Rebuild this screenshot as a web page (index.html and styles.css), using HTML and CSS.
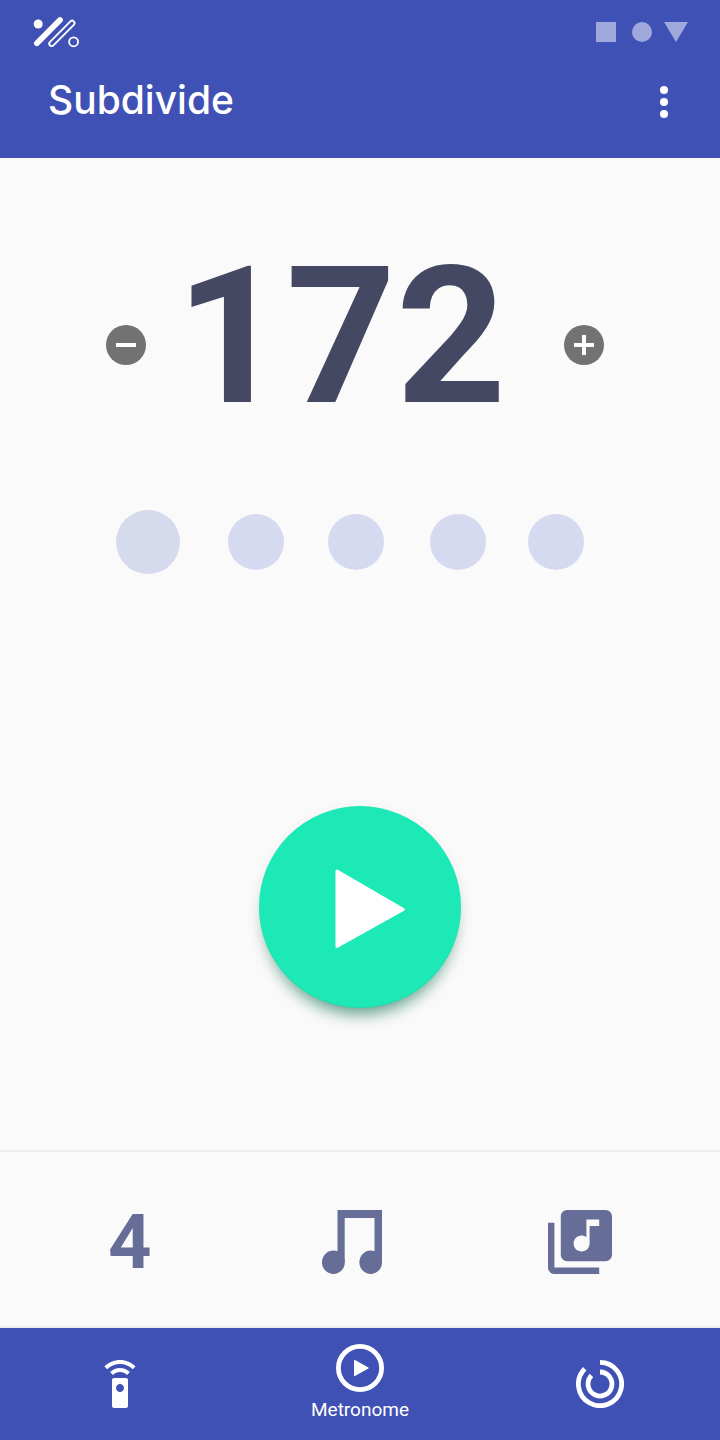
FILE: index.html
```html
<!DOCTYPE html>
<html lang="en">
<head>
<meta charset="utf-8">
<meta name="viewport" content="width=device-width, initial-scale=1">
<title>Subdivide</title>
<link rel="stylesheet" href="styles.css">
</head>
<body>
<header class="header">
  <div class="status">
    <svg class="logo" viewBox="0 0 48 32" aria-hidden="true" fill="none" stroke="#fff" stroke-linecap="round">
      <circle cx="6.2" cy="8" r="4.5" fill="#fff" stroke="none"/>
      <path d="M4.9 27.2L28 4" stroke-width="5.8"/>
      <path d="M18 25.8L38.4 5.4a2.3 2.3 0 0 1 3.4 3.4L21.4 29.4a2.3 2.3 0 0 1-3.4-3.6z" stroke-width="1.8"/>
      <circle cx="41.6" cy="25.8" r="4.5" stroke-width="1.8"/>
    </svg>
    <svg class="system" viewBox="0 0 92 20" aria-hidden="true" fill="#9fa8da">
      <path d="M0 0h20v20H0z"/><circle cx="46" cy="10" r="10"/><path d="M68 0h24L80 20z"/>
    </svg>
  </div>
  <div class="appbar">
    <h1 class="title">Subdivide</h1>
    <button class="icon-button more" aria-label="More options">
      <svg viewBox="0 0 8 32" fill="#fff"><circle cx="4" cy="4" r="4"/><circle cx="4" cy="16" r="4"/><circle cx="4" cy="28" r="4"/></svg>
    </button>
  </div>
</header>
<main class="main">
  <section class="tempo" aria-label="Tempo">
    <button class="icon-button step" aria-label="Decrease tempo">
      <svg viewBox="0 0 40 40"><circle cx="20" cy="20" r="20" fill="#727272"/><path d="M10 18h20v4H10z" fill="#fff"/></svg>
    </button>
    <output class="bpm">172</output>
    <button class="icon-button step" aria-label="Increase tempo">
      <svg viewBox="0 0 40 40"><circle cx="20" cy="20" r="20" fill="#727272"/><path d="M10 18h8v-8h4v8h8v4h-8v8h-4v-8h-8z" fill="#fff"/></svg>
    </button>
  </section>
  <div class="beats" aria-hidden="true">
    <span class="beat beat-accent"></span><span class="beat"></span><span class="beat"></span><span class="beat"></span><span class="beat"></span>
  </div>
  <button class="play" aria-label="Play">
    <svg viewBox="0 0 202 202"><path d="M78 65L144.300 103.500L78 140.500z" fill="#fff" stroke="#fff" stroke-width="3" stroke-linejoin="round"/></svg>
  </button>
</main>
<section class="tools" aria-label="Rhythm settings">
  <button class="icon-button count" aria-label="4 beats">4</button>
  <button class="icon-button note" aria-label="Subdivision">
    <svg viewBox="0 0 60 64" fill="#666d97"><path d="M15.500 0H60V52.300H52.500V8H22.700V52.300H15.500z"/><ellipse cx="11.400" cy="52.300" rx="11.400" ry="11.700"/><ellipse cx="48.700" cy="52.300" rx="11.300" ry="11.700"/></svg>
  </button>
  <button class="icon-button library" aria-label="Library">
    <svg viewBox="2 2 20 20" fill="#666d97"><path d="M20 2H8c-1.100 0-2 .9-2 2v12c0 1.100.9 2 2 2h12c1.100 0 2-.9 2-2V4c0-1.100-.9-2-2-2zm-2 5h-3v5.500c0 1.380-1.120 2.500-2.500 2.500S10 13.880 10 12.500s1.120-2.500 2.500-2.500c.57 0 1.080.19 1.500.51V5h4v2zM4 6H2v14c0 1.100.9 2 2 2h14v-2H4V6z"/></svg>
  </button>
</section>
<nav class="nav">
  <a class="nav-item" href="#remote" aria-label="Remote">
    <svg viewBox="0 0 24 24" fill="#fff"><path d="M15 9H9c-.55 0-1 .45-1 1v13c0 .55.45 1 1 1h6c.55 0 1-.45 1-1V10c0-.55-.45-1-1-1zm-3 7c-1.100 0-2-.9-2-2s.9-2 2-2 2 .9 2 2-.9 2-2 2zM7.050 6.050l1.410 1.410C9.370 6.560 10.620 6 12 6s2.630.56 3.540 1.460l1.410-1.410C15.680 4.780 13.930 4 12 4s-3.680.78-4.950 2.050zM12 0C8.960 0 6.210 1.230 4.220 3.220l1.410 1.410C7.260 3.010 9.510 2 12 2s4.740 1.010 6.360 2.640l1.410-1.410C17.790 1.230 15.040 0 12 0z"/></svg>
  </a>
  <a class="nav-item" href="#metronome" aria-current="page">
    <svg viewBox="0 0 48 48" aria-hidden="true"><circle cx="24" cy="24" r="21.600" fill="none" stroke="#fff" stroke-width="4.800"/><path d="M18.700 16.700L32 24L18.700 31.300z" fill="#fff" stroke="#fff" stroke-width="1.400" stroke-linejoin="round"/></svg>
    <span class="nav-label">Metronome</span>
  </a>
  <a class="nav-item" href="#timer" aria-label="Timer">
    <svg viewBox="0 0 48 48" fill="none" stroke="#fff" stroke-width="4.800"><path d="M24 2.400A21.600 21.600 0 1 1 8.730 8.730"/><path d="M24 12A12 12 0 1 1 15.510 15.510"/></svg>
  </a>
</nav>
</body>
</html>
```
FILE: styles.css
```css
* {
  box-sizing: border-box;
}

body {
  margin: 0;
  min-height: 100vh;
  display: flex;
  flex-direction: column;
  background: #fafafa;
  font-family: Roboto, "Liberation Sans", sans-serif;
}

svg {
  display: block;
  width: 100%;
}

.header {
  padding: 16px 32px 32px;
  background: #3f51b5;
  color: #fff;
}

.status,
.appbar {
  display: flex;
  align-items: center;
  justify-content: space-between;
}

.logo {
  width: 48px;
}

.system {
  width: 92px;
}

.appbar {
  padding: 28px 20px 2px 16px;
}

.title {
  margin: 0;
  font: 500 39px/48px Inter, sans-serif;
}

.icon-button {
  padding: 0;
  border: 0;
  background: none;
  cursor: pointer;
}

.more {
  width: 8px;
  margin-top: 4px;
}

.main {
  flex: 1;
  display: flex;
  flex-direction: column;
  align-items: center;
  padding: 83px 0 142px;
}

.tempo {
  align-self: stretch;
  display: flex;
  align-items: center;
  justify-content: space-between;
  padding: 0 116px 0 106px;
}

.step {
  width: 40px;
}

.bpm {
  padding: 0 28px 16px 0;
  color: #454862;
  font-size: 192px;
  font-weight: 700;
  line-height: 192px;
}

.beats {
  align-self: stretch;
  display: grid;
  grid-template-columns: 112fr 100fr 102fr 98fr 56fr;
  align-items: center;
  margin-top: 61px;
  padding: 0 136px 0 116px;
}

.beat {
  width: 56px;
  height: 56px;
  border-radius: 50%;
  background: #d6daf0;
}

.beat-accent {
  width: 64px;
  height: 64px;
  background: #d5daed;
}

.play {
  width: 202px;
  height: 202px;
  margin-top: 232px;
  padding: 0;
  border: 0;
  border-radius: 50%;
  background: #1de9b6;
  box-shadow: 0 14px 16px -8px rgba(0, 105, 75, 0.6), 0 4px 16px rgba(0, 60, 40, 0.06), inset 0 -1px 1px rgba(0, 0, 0, 0.06);
  cursor: pointer;
}

.tools {
  display: flex;
  align-items: center;
  justify-content: space-between;
  padding: 58px 108px 52px;
  border: solid #ececec;
  border-width: 2px 0;
}

.count {
  width: 48px;
  color: #666d97;
  font: 700 76px/64px Roboto, sans-serif;
  text-align: left;
}

.note {
  width: 60px;
}

.library {
  width: 64px;
}

.nav {
  display: grid;
  grid-template-columns: repeat(3, 1fr);
  height: 112px;
  background: #3f51b5;
}

.nav-item {
  display: flex;
  flex-direction: column;
  align-items: center;
  justify-content: center;
  gap: 4px;
  color: #fff;
  text-decoration: none;
}

.nav-item svg {
  width: 48px;
}

.nav-label {
  font-size: 19px;
  line-height: 28px;
}
```
